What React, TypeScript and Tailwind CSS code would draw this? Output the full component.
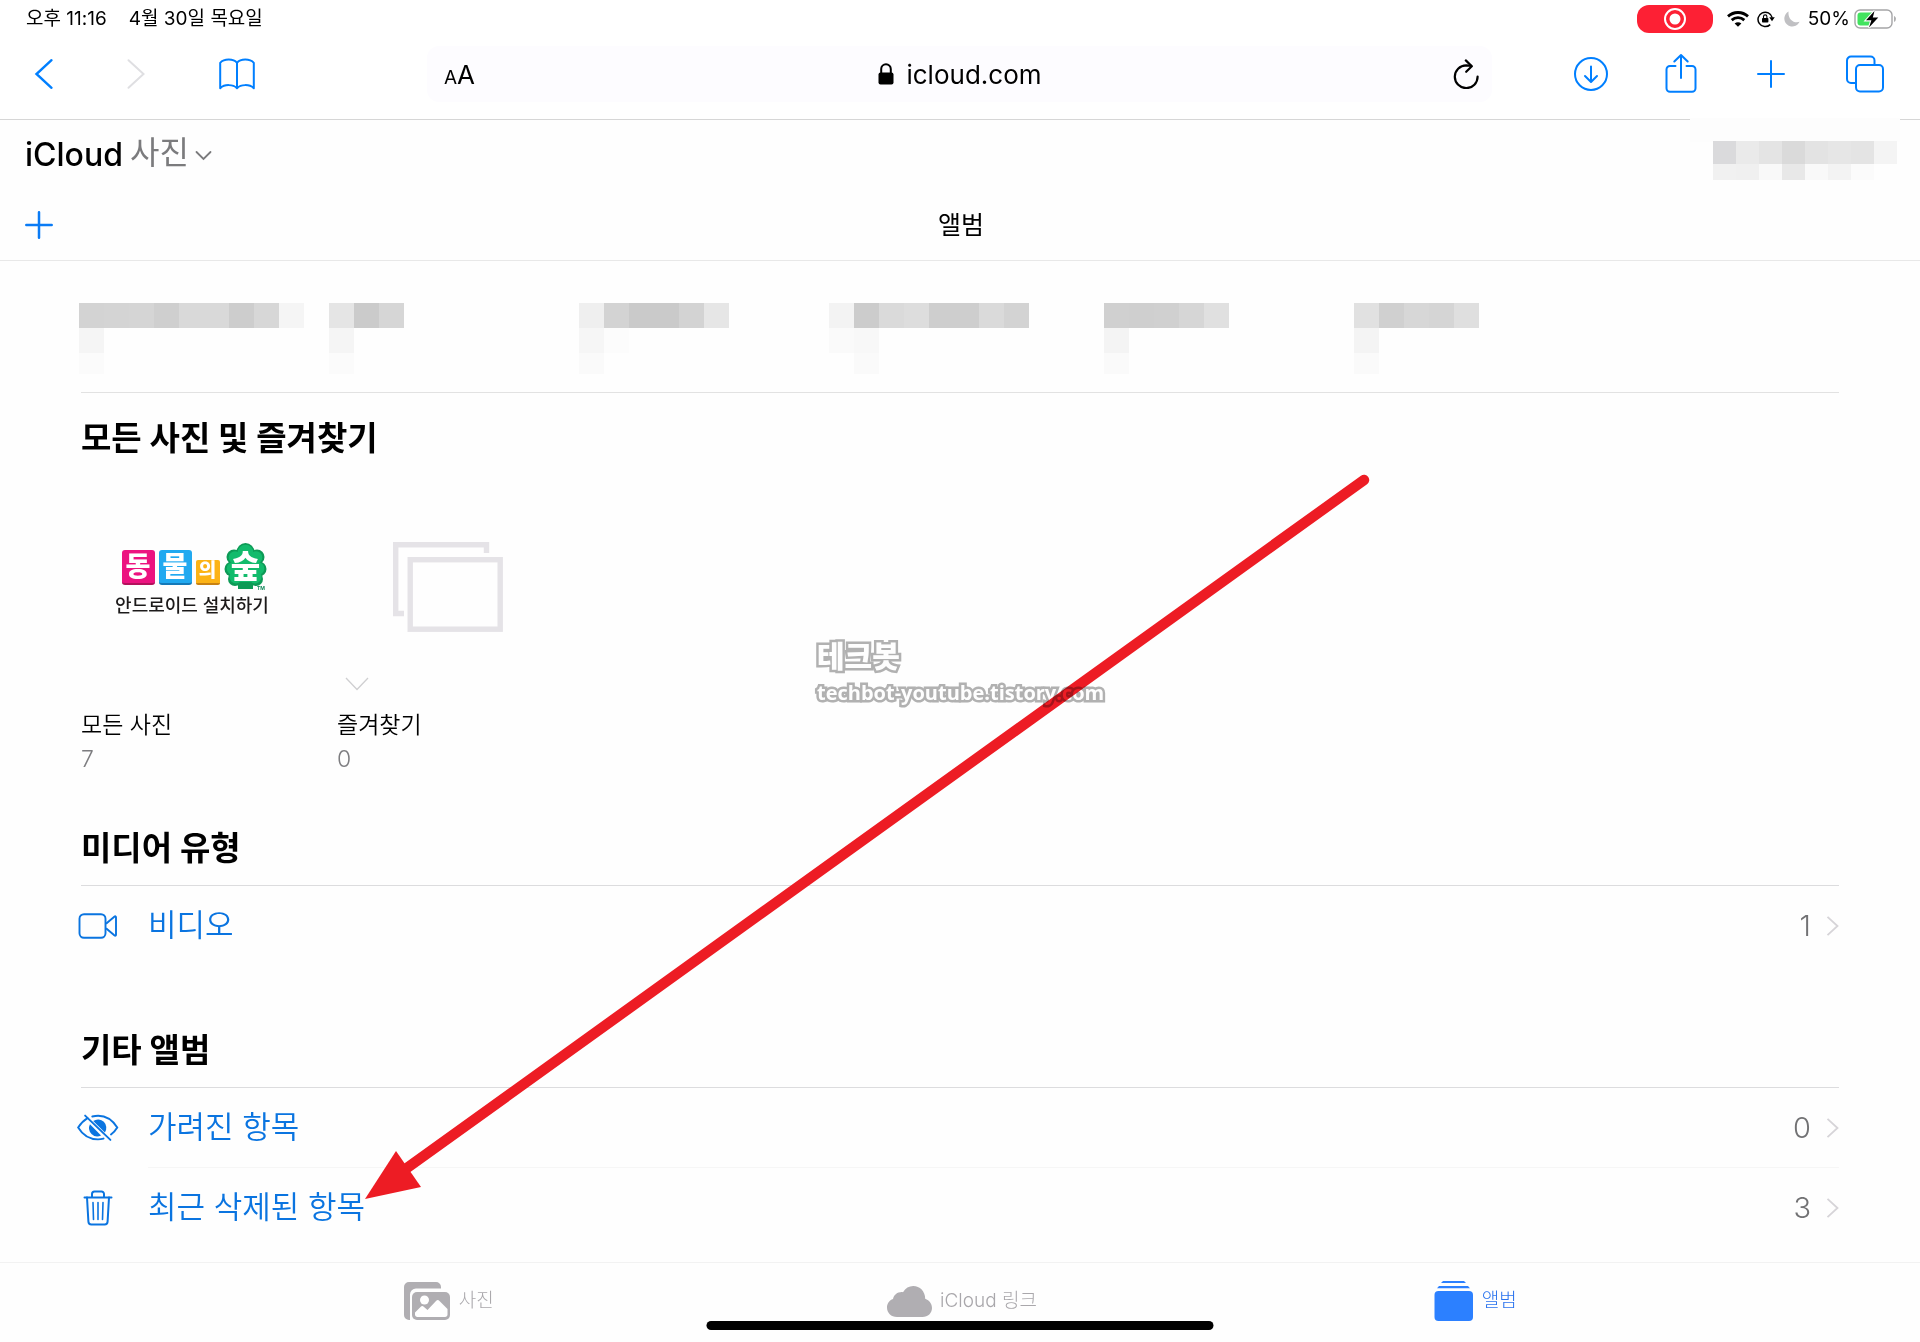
import React from "react";

type Mosaic = { width: number; rows: string[][] };

const albumMosaics: Mosaic[] = [
  {
    width: 250,
    rows: [
      ["#d3d3d3", "#d4d4d4", "#d5d5d5", "#cfcfcf", "#d9d9d9", "#d9d9d9", "#cdcdcd", "#d7d7d7", "#f5f5f5"],
      ["#f5f5f5"],
      ["#fbfbfb"],
    ],
  },
  { width: 250, rows: [["#e5e5e5", "#cbcbcb", "#d6d6d6"], ["#f5f5f5"], ["#fbfbfb"]] },
  {
    width: 250,
    rows: [["#efefef", "#d3d3d3", "#cacaca", "#cacaca", "#d3d3d3", "#e6e6e6"], ["#f6f6f6", "#fcfcfc"], ["#fafafa"]],
  },
  {
    width: 275,
    rows: [
      ["#f3f3f3", "#cccccc", "#dadada", "#dddddd", "#cecece", "#cecece", "#dadada", "#d3d3d3"],
      ["#fafafa", "#f8f8f8"],
      ["#fefefe", "#fafafa"],
    ],
  },
  { width: 250, rows: [["#d0d0d0", "#cfcfcf", "#d0d0d0", "#d6d6d6", "#e0e0e0"], ["#f4f4f4"], ["#fafafa"]] },
  { width: 125, rows: [["#e1e1e1", "#d0d0d0", "#d7d7d7", "#d5d5d5", "#dfdfdf"], ["#f4f4f4"], ["#fafafa"]] },
];

const accountMosaic = [
  ["#dadadc", "#eaeaea", "#e4e4e4", "#dadada", "#e3e3e3", "#e6e6e6", "#e4e4e4", "#f4f4f4"],
  ["#f1f1f1", "#f0f0f0", "#f9f9f9", "#e8e8e8", "#f9f9f9", "#f3f3f3", "#fbfbfb"],
];

function StatusBar() {
  return (
    <div className="flex h-[38px] items-center justify-between bg-white pl-[26px] pr-[23px] text-[19px] text-black">
      <div className="flex gap-[22px]">
        <span>오후 11:16</span>
        <span>4월 30일 목요일</span>
      </div>
      <div className="flex items-center">
        <span className="flex h-7 w-[76px] items-center justify-center rounded-[12px] bg-[#fd2034]">
          <svg className="size-6" viewBox="0 0 24 24">
            <circle cx="12" cy="12" r="10" fill="none" stroke="#fff" strokeWidth="2" />
            <circle cx="12" cy="12" r="5.5" fill="#fff" />
          </svg>
        </span>
        <svg className="ml-[14px] h-4 w-[22px]" viewBox="0 0 22 16" fill="none" stroke="#000" strokeWidth="2.8">
          <path d="M1 5.4C6.6.2 15.4.2 21 5.4" />
          <path d="M4.7 9.1c3.6-3.3 9-3.3 12.6 0" />
          <path d="M11 15.8 7.6 12.5c2-1.8 4.8-1.8 6.8 0z" fill="#000" stroke="none" />
        </svg>
        <svg className="ml-2 h-[18px] w-[18px]" viewBox="0 0 18 18">
          <path d="M13.2 14.6A7.2 7.2 0 1 1 15.2 7.6" fill="none" stroke="#000" strokeWidth="1.5" />
          <path d="M12.2 7.2h5.6l-2.8 4z" fill="#000" />
          <rect x="5" y="8" width="6.4" height="4.6" rx=".8" fill="#000" />
          <path d="M6.5 8V6.6a1.7 1.7 0 0 1 3.4 0V8" fill="none" stroke="#000" strokeWidth="1.1" />
        </svg>
        <svg className="ml-[9px] size-4" viewBox="0 0 16 16">
          <path d="M4.6.4a8 8 0 1 0 11 10.4C9.500 13 3.400 7.500 4.600.4z" fill="#c0c0c3" />
        </svg>
        <span className="ml-2">50%</span>
        <svg className="ml-1 h-5 w-[43px]" viewBox="0 0 43 20">
          <rect x="1" y="1" width="37" height="18" rx="5" fill="none" stroke="#a5a5a7" strokeWidth="1.4" />
          <path d="M3.5 6.5a3 3 0 0 1 3-3H18v13H6.5a3 3 0 0 1-3-3z" fill="#42e35f" />
          <path d="M40.3 7v6c1.6-.6 2-5.2 0-6z" fill="#8a8a8c" />
          <path d="M20.5 2 12 11.3h5.400L15 18.600l9.300-10.200h-5.500z" fill="#000" stroke="#fff" strokeWidth="2.2" paintOrder="stroke" />
        </svg>
      </div>
    </div>
  );
}

function Toolbar() {
  return (
    <div className="flex h-[82px] items-center border-b border-[#d6d6d6] bg-white pb-[9px] text-[#007fff]">
      <nav aria-label="탐색" className="flex w-[427px] shrink-0 items-center pl-4">
        <button aria-label="뒤로" className="flex w-14 justify-center">
          <svg className="h-[34px] w-5" viewBox="0 0 20 34" fill="none" stroke="currentColor" strokeWidth="2.4" strokeLinecap="round">
            <path d="M17.5 3.2 2.5 17l15 13.8" />
          </svg>
        </button>
        <button aria-label="앞으로" className="flex w-32 justify-center text-[#dfdfe2]">
          <svg className="h-[34px] w-5" viewBox="0 0 20 34" fill="none" stroke="currentColor" strokeWidth="2" strokeLinecap="round">
            <path d="M2.5 3.2 17.5 17l-15 13.8" />
          </svg>
        </button>
        <button aria-label="책갈피" className="flex w-[74px] justify-center">
          <svg className="h-8 w-9" viewBox="0 0 36 32" fill="none" stroke="currentColor" strokeWidth="2" strokeLinejoin="round">
            <path d="M18 4.8C14.5.5 5 .5 1.200 4.800V30.200c4.300-4.200 13-4 16.800 0 3.800-4 12.500-4.200 16.800 0V4.800C31 .5 21.500.5 18 4.800v25.400" />
          </svg>
        </button>
      </nav>
      <div className="grid h-14 min-w-0 flex-1 grid-cols-[1fr_auto_1fr] items-center rounded-xl bg-[#fdfcff] pl-[17px] pr-3 text-black">
        <button aria-label="페이지 보기 설정" className="flex items-baseline justify-self-start">
          <span className="text-[19px]">A</span>
          <span className="text-[26px]">A</span>
        </button>
        <label className="flex items-center gap-3 pr-1">
          <svg className="h-[22px] w-4" viewBox="0 0 16 22">
            <rect x=".5" y="9.500" width="15" height="12" rx="2" fill="#000" />
            <path d="M3.2 10V6a4.800 4.800 0 0 1 9.600 0v4" fill="none" stroke="#000" strokeWidth="2" />
          </svg>
          <input aria-label="주소" defaultValue="icloud.com" className="field-sizing-content bg-transparent text-[26px] outline-none" />
        </label>
        <button aria-label="새로 고침" className="justify-self-end">
          <svg className="h-[30px] w-7" viewBox="0 0 28 30" fill="none" stroke="#000" strokeWidth="2.2" strokeLinecap="round" strokeLinejoin="round">
            <path d="M25.600 17.500A11.400 11.400 0 1 1 14.200 6.300l5 .6" />
            <path d="m13.800 1.400 6 5.800-5.600 5.600" />
          </svg>
        </button>
      </div>
      <nav aria-label="도구" className="flex w-[428px] shrink-0 items-center pl-[54px]">
        <button aria-label="다운로드" className="flex w-[90px] justify-center">
          <svg className="size-9" viewBox="0 0 36 36" fill="none" stroke="currentColor" strokeWidth="2" strokeLinecap="round" strokeLinejoin="round">
            <circle cx="18" cy="18" r="16" />
            <path d="M18 10.500V25.500M12 20l6 6 6-6" />
          </svg>
        </button>
        <button aria-label="공유" className="flex w-[90px] justify-center pb-0.5">
          <svg className="h-10 w-8" viewBox="0 0 32 40" fill="none" stroke="currentColor" strokeWidth="2" strokeLinecap="round" strokeLinejoin="round">
            <path d="M10.500 13H5a3.500 3.500 0 0 0-3.500 3.500v18.800A3.500 3.500 0 0 0 5 38.800h22a3.500 3.500 0 0 0 3.500-3.500V16.500A3.500 3.500 0 0 0 27 13h-5.500" />
            <path d="M16 25V2M9.300 8.500 16 2l6.700 6.500" />
          </svg>
        </button>
        <button aria-label="새로운 탭" className="flex w-[90px] justify-center">
          <svg className="size-7" viewBox="0 0 28 28" stroke="currentColor" strokeWidth="2" strokeLinecap="round">
            <path d="M14 1v26M1 14h26" />
          </svg>
        </button>
        <button aria-label="탭 보기" className="flex w-[98px] justify-center">
          <svg className="size-[38px]" viewBox="0 0 38 38" fill="none" stroke="currentColor" strokeWidth="2">
            <rect x="10" y="10" width="27" height="26.500" rx="4" />
            <path d="M10 28H5a4 4 0 0 1-4-4V5.500a4 4 0 0 1 4-4h19.500a4 4 0 0 1 4 4V10" />
          </svg>
        </button>
      </nav>
    </div>
  );
}

function AppHeader() {
  return (
    <header>
      <div className="relative flex h-[70px] items-center justify-between pl-[25px] pr-[23px]">
        <div className="absolute right-5 -top-0.5 h-6 w-[210px] bg-[#fdfdfd]" />
        <button className="flex items-center">
          <span className="text-[32px] font-medium text-black">iCloud</span>
          <span className="ml-[7px] pb-1 text-[32px] text-[#7b7b7d]">사진</span>
          <svg className="ml-1.5 h-[11px] w-[17px]" viewBox="0 0 17 11" fill="none" stroke="#7b7b7d" strokeWidth="1.8" strokeLinecap="round">
            <path d="m1.500 2 7 7 7-7" />
          </svg>
        </button>
        <div className="relative mt-2.5">
          {accountMosaic.map((row, r) => (
            <div key={r} className={r === 0 ? "flex h-[23px]" : "flex h-4"}>
              {row.map((c, i) => (
                <div key={i} className="w-[23px]" style={{ backgroundColor: c }} />
              ))}
            </div>
          ))}
        </div>
      </div>
      <div className="grid h-[71px] grid-cols-[1fr_auto_1fr] items-center border-b border-[#e8e8e8] pl-[25px] pr-[23px]">
        <button aria-label="앨범 추가" className="justify-self-start text-[#0a7bf5]">
          <svg className="size-7" viewBox="0 0 28 28" stroke="currentColor" strokeWidth="2.5" strokeLinecap="round">
            <path d="M14 1.300v25.400M1.300 14h25.400" />
          </svg>
        </button>
        <h1 className="pt-0.5 text-[25px] text-black">앨범</h1>
      </div>
    </header>
  );
}

function MosaicRow() {
  return (
    <div className="flex pb-[18px] pl-[79px] pt-[42px]">
      {albumMosaics.map((m, k) => (
        <div key={k} className="shrink-0" style={{ width: m.width }}>
          {m.rows.map((row, r) => (
            <div key={r} className={r === 2 ? "flex h-[21px]" : "flex h-[25px]"}>
              {row.map((c, i) => (
                <div key={i} className="w-[25px]" style={{ backgroundColor: c }} />
              ))}
            </div>
          ))}
        </div>
      ))}
    </div>
  );
}

function ForestLogo() {
  return (
    <div className="flex flex-col items-center">
      <div className="ml-1 flex h-12 items-end gap-1 pb-[5px] font-black text-white">
        <span className="flex h-[35px] w-[33px] items-center justify-center rounded-[3px] border-b-2 border-[#b3115c] bg-[#ec1380] pt-0.5 text-[27px]">동</span>
        <span className="flex h-[35px] w-[33px] items-center justify-center rounded-[3px] border-b-2 border-[#1479b8] bg-[#21a9f0] pt-0.5 text-[27px]">물</span>
        <span className="flex h-[25px] w-6 items-center justify-center rounded-[2px] border-b-2 border-[#c98212] bg-[#fcb316] text-[19px]">의</span>
        <svg className="-mb-[5px] h-12 w-[43px]" viewBox="0 0 43 48">
          <g fill="#0d9a56">
            <circle cx="21.500" cy="10" r="9" />
            <circle cx="10" cy="15" r="7.500" />
            <circle cx="33" cy="15" r="7.500" />
            <circle cx="8" cy="27" r="7.500" />
            <circle cx="35" cy="27" r="7.500" />
            <circle cx="11" cy="37" r="7" />
            <circle cx="32" cy="37" r="7" />
            <rect x="14" y="38" width="15" height="9" />
          </g>
          <g fill="#12bb6c">
            <circle cx="21.500" cy="10.500" r="7.800" />
            <circle cx="11" cy="15.500" r="6.300" />
            <circle cx="32" cy="15.500" r="6.300" />
            <circle cx="9" cy="26.500" r="6.300" />
            <circle cx="34" cy="26.500" r="6.300" />
            <circle cx="12" cy="35" r="6.500" />
            <circle cx="31" cy="35" r="6.500" />
            <rect x="9" y="14" width="25" height="26" />
          </g>
          <text x="21.500" y="35.500" textAnchor="middle" fontSize="32" fontWeight="900" fill="#fff">숲</text>
          <text x="33" y="47.500" fontSize="5" fontWeight="700" fill="#12875a">TM</text>
        </svg>
      </div>
      <span className="mt-0.5 whitespace-nowrap text-[18px] font-medium leading-7 text-[#1c1a1a]">안드로이드 설치하기</span>
    </div>
  );
}

function EmptyStack() {
  return (
    <svg className="h-[90px] w-[110px]" viewBox="0 0 110 90" fill="none" stroke="#e5e3e7" strokeWidth="5.4">
      <path d="M93.500 11V2.700H2.700V71.500H11" />
      <rect x="17.200" y="17.700" width="90" height="69.500" />
    </svg>
  );
}

function AlbumTile({ name, count, children }: { name: string; count: number; children: React.ReactNode }) {
  return (
    <a href="#album" className="block w-[222px]">
      {children}
      <span className="mt-[10px] block text-[23px] font-[350] leading-[34px] text-black">{name}</span>
      <span className="block text-[23px] font-light leading-[34px] text-[#7d7d80]">{count}</span>
    </a>
  );
}

function VideoIcon() {
  return (
    <svg className="h-[26px] w-10" viewBox="0 0 40 26" fill="none" stroke="currentColor" strokeWidth="1.9" strokeLinejoin="round">
      <rect x="1.500" y="1.200" width="26" height="23.600" rx="4.500" />
      <path d="m28 10.800 8.300-7.100c1-.8 1.700-.5 1.700.6v17.400c0 1.100-.7 1.400-1.700.6L28 15.200" />
    </svg>
  );
}

function HiddenIcon() {
  return (
    <svg className="h-[30px] w-11" viewBox="0 0 44 30" fill="none" stroke="currentColor" strokeWidth="2" strokeLinecap="round">
      <path d="M16 2.900C18 2.400 20 2.100 22.200 2.100c10 0 16.300 6.500 20 12.400-1.600 2.700-3.800 5.200-6.600 7.300" />
      <path d="M11 4.600C7 7 3.600 10.600 1.200 14.500 5 20.800 12 26.900 22 26.900c2 0 4-.3 5.800-.8" />
      <path d="M8.500 2 35 27.500" />
      <path d="M17 7.600a8.700 8.700 0 0 1 12.200 12z" fill="currentColor" stroke="none" />
      <path d="M13.600 11.200a8.700 8.700 0 0 0 11.600 11.700z" fill="currentColor" stroke="none" />
    </svg>
  );
}

function TrashIcon() {
  return (
    <svg className="h-9 w-[30px]" viewBox="0 0 30 36" fill="none" stroke="currentColor" strokeWidth="2" strokeLinecap="round" strokeLinejoin="round">
      <path d="M1.500 7.500h27M9 7V4a2.500 2.500 0 0 1 2.500-2.500h7A2.500 2.500 0 0 1 21 4v3" />
      <path d="m4 7.500 1.400 24a3 3 0 0 0 3 2.900h13.200a3 3 0 0 0 3-2.900L26 7.500" />
      <path d="m10 12.500.5 17M15 12.500v17M20 12.500l-.5 17" strokeWidth="1.6" />
    </svg>
  );
}

function AlbumRow({ icon, label, count }: { icon: React.ReactNode; label: string; count: number }) {
  return (
    <a href="#album" className="flex h-[79px] items-center">
      <span className="-ml-1 flex w-[42px] shrink-0 justify-center text-[#0a74e0]">{icon}</span>
      <span className="ml-[29px] text-[31px] font-[350] text-[#0a74e0]">{label}</span>
      <span className="ml-auto text-[29px] font-light text-[#727274]">{count}</span>
      <svg className="ml-[15px] h-5 w-[13px]" viewBox="0 0 13 20" fill="none" stroke="#d6d4d8" strokeWidth="1.8">
        <path d="m1.500.8 10 9.200-10 9.200" />
      </svg>
    </a>
  );
}

function SectionTitle({ children }: { children: React.ReactNode }) {
  return <h2 className="text-[33px] font-bold leading-10 text-black">{children}</h2>;
}

function TabBar() {
  return (
    <nav aria-label="보기" className="relative grid h-20 grid-cols-3 border-t border-[#f2f2f2] pb-[3px] pl-[192px] pr-[188px] text-[19px] font-light">
      <a href="#photos" className="flex items-center justify-center gap-[9px] text-[#a9a7ab]">
        <svg className="h-[38px] w-[46px]" viewBox="0 0 46 38">
          <path d="M5 0h27a5 5 0 0 1 5 5v1.500H12a6 6 0 0 0-6 6V38H5a5 5 0 0 1-5-5V5a5 5 0 0 1 5-5z" fill="#b0aeb2" />
          <rect x="8" y="10" width="38" height="28" rx="5" fill="#b0aeb2" stroke="#fefefe" strokeWidth="2" paintOrder="stroke" />
          <circle cx="20.500" cy="18" r="4.500" fill="#fff" />
          <path d="M11 32.500v-2l5.500-5.500c1.300-1.200 2.200-1.200 3.500 0l3.500 3 8.500-9c1.200-1.200 2.300-1.200 3.500 0l8 8v5.500c0 1.500-1 2.500-2.500 2.500H13.500c-1.500 0-2.500-1-2.500-2.500z" fill="#fff" />
        </svg>
        <span>사진</span>
      </a>
      <a href="#links" className="flex items-center justify-center gap-2 text-[#a9a7ab]">
        <svg className="h-[31px] w-[45px]" viewBox="0 0 45 31">
          <path d="M10 31C4 31 0 26.800 0 21.500c0-3.700 2.300-7.300 6-8.500C7 8.500 11 5.600 16 6.200 18.500 2 22 0 26.200 0c6.700 0 12 5.300 12 12.800C42.500 14.500 45 17.800 45 22c0 5-4 9-9.500 9z" fill="#b0aeb2" />
        </svg>
        <span>iCloud 링크</span>
      </a>
      <a href="#albums" className="flex items-center justify-center gap-2 text-[#2a73ee]">
        <svg className="h-10 w-10" viewBox="0 0 40 40" fill="#2c80ff">
          <path d="M9 0h21l2 2H7zM5 5h29l2 2.300H3z" />
          <rect x=".5" y="10" width="38.500" height="30" rx="4" />
        </svg>
        <span>앨범</span>
      </a>
      <div className="absolute bottom-3 left-1/2 h-[9px] w-[507px] -translate-x-1/2 rounded-full bg-black" />
    </nav>
  );
}

function Annotations() {
  return (
    <div aria-hidden="true" className="pointer-events-none absolute inset-0">
      <svg className="absolute left-[365px] top-[470px] h-[730px] w-[1010px]" viewBox="365 470 1010 730">
        <path d="M1364 480 400 1173" stroke="#ed1c24" strokeWidth="10.5" strokeLinecap="round" />
        <path d="m365 1199 31-48 25 36z" fill="#ed1c24" />
      </svg>
      <div className="absolute left-[817px] top-[636px] text-white mix-blend-multiply [paint-order:stroke_fill] [-webkit-text-stroke:5px_#b2b2b2]">
        <div className="text-[30px] font-black leading-10">테크봇</div>
        <div className="font-['Open_Sans','Noto_Sans',sans-serif] text-[20px] font-bold leading-[34px]">techbot-youtube.tistory.com</div>
      </div>
    </div>
  );
}

export default function App() {
  return (
    <div className="relative flex min-h-screen flex-col overflow-hidden bg-[#fefefe] font-['Inter','Noto_Sans_CJK_KR',sans-serif]">
      <StatusBar />
      <Toolbar />
      <AppHeader />
      <main className="flex-1">
        <MosaicRow />
        <div className="px-[81px]">
          <section className="border-t border-[#e2e2e2] pt-[25px]">
            <SectionTitle>모든 사진 및 즐겨찾기</SectionTitle>
            <div className="mt-[18px] flex gap-[34px]">
              <AlbumTile name="모든 사진" count={7}>
                <span className="flex h-[222px] items-center justify-center pb-3">
                  <ForestLogo />
                </span>
              </AlbumTile>
              <AlbumTile name="즐겨찾기" count={0}>
                <span className="relative flex h-[222px] items-center justify-center">
                  <EmptyStack />
                  <svg className="absolute bottom-[7px] left-2 h-[14px] w-6" viewBox="0 0 24 14" fill="none" stroke="#cfcfd1" strokeWidth="1.3">
                    <path d="m1 1 11 11.500L23 1" />
                  </svg>
                </span>
              </AlbumTile>
            </div>
          </section>
          <section className="mt-[52px]">
            <SectionTitle>미디어 유형</SectionTitle>
            <div className="mt-[17px] border-t border-[#dcdcde]">
              <AlbumRow icon={<VideoIcon />} label="비디오" count={1} />
            </div>
          </section>
          <section className="mt-[65px]">
            <SectionTitle>기타 앨범</SectionTitle>
            <div className="mt-[17px] border-t border-[#dcdcde]">
              <AlbumRow icon={<HiddenIcon />} label="가려진 항목" count={0} />
              <div className="ml-[67px] h-px bg-[#f6f6f6]" />
              <AlbumRow icon={<TrashIcon />} label="최근 삭제된 항목" count={3} />
            </div>
          </section>
        </div>
      </main>
      <TabBar />
      <Annotations />
    </div>
  );
}
